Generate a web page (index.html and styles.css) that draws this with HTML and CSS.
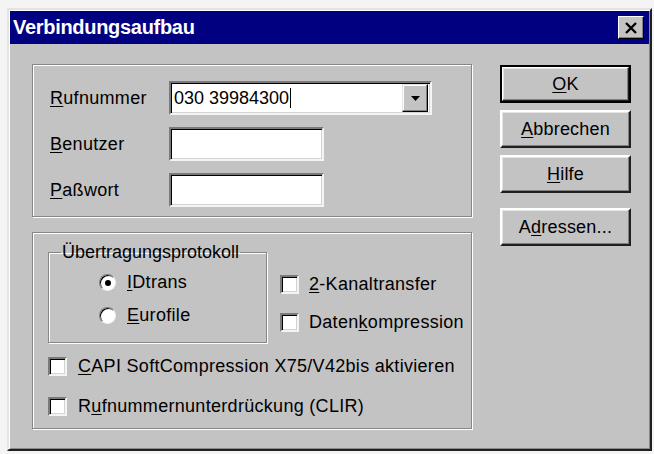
FILE: index.html
```html
<!DOCTYPE html>
<html lang="de">
<head>
    <meta charset="UTF-8">
    <title>Verbindungsaufbau</title>
    <link rel="stylesheet" href="styles.css">
</head>
<body>
    <!-- Dialog window -->
    <div class="window">
        <div class="titlebar">
            <span class="title">Verbindungsaufbau</span>
            <span class="close-btn">
                <svg width="14" height="12" viewBox="0 0 14 12">
                    <path d="M2 1 L12 11 M12 1 L2 11" stroke="#000" stroke-width="2.4" fill="none"/>
                </svg>
            </span>
        </div>

        <div class="dialog-body">
            <div class="left-col">
                <!-- Connection data -->
                <div class="group group-top">
                    <div class="field-row">
                        <label class="field-label"><u>R</u>ufnummer</label>
                        <div class="field combo">
                            <span class="combo-text">030 39984300<span class="caret"></span></span>
                            <span class="combo-btn">
                                <svg width="9" height="5" viewBox="0 0 9 5"><path d="M0 0 H9 L4.5 5 Z" fill="#000"/></svg>
                            </span>
                        </div>
                    </div>
                    <div class="field-row">
                        <label class="field-label"><u>B</u>enutzer</label>
                        <div class="field text-field"></div>
                    </div>
                    <div class="field-row">
                        <label class="field-label"><u>P</u>aßwort</label>
                        <div class="field text-field"></div>
                    </div>
                </div>

                <!-- Transfer options -->
                <div class="group group-bottom">
                    <div class="proto-row">
                        <fieldset class="subgroup">
                            <legend>Übertragungsprotokoll</legend>
                            <div class="option radio-opt">
                                <span class="radio checked"></span>
                                <span><u>I</u>Dtrans</span>
                            </div>
                            <div class="option radio-opt">
                                <span class="radio"></span>
                                <span><u>E</u>urofile</span>
                            </div>
                        </fieldset>
                        <div class="side-checks">
                            <div class="option">
                                <span class="checkbox"></span>
                                <span><u>2</u>-Kanaltransfer</span>
                            </div>
                            <div class="option">
                                <span class="checkbox"></span>
                                <span>Daten<u>k</u>ompression</span>
                            </div>
                        </div>
                    </div>
                    <div class="option wide-opt">
                        <span class="checkbox"></span>
                        <span><u>C</u>API SoftCompression X75/V42bis aktivieren</span>
                    </div>
                    <div class="option wide-opt">
                        <span class="checkbox"></span>
                        <span>R<u>u</u>fnummernunterdrückung (CLIR)</span>
                    </div>
                </div>
            </div>

            <!-- Command buttons -->
            <div class="btn-col">
                <button class="btn btn-default"><u>O</u>K</button>
                <button class="btn"><u>A</u>bbrechen</button>
                <button class="btn"><u>H</u>ilfe</button>
                <button class="btn btn-extra">A<u>d</u>ressen...</button>
            </div>
        </div>
    </div>
</body>
</html>
```

FILE: styles.css
```css
/* Page */
body {
    margin: 0;
    padding: 8px 0 0 7px;
    background-color: #f4f4f4;
    font-family: "Liberation Sans", Arial, sans-serif;
    font-size: 18px;
    letter-spacing: 0.3px;
    color: #000;
}

u {
    text-decoration: underline;
    text-underline-offset: 2px;
}

/* Raised window frame */
.window {
    box-sizing: border-box;
    width: 645px;
    height: 443px;
    padding: 1px;
    background-color: #c3c3c3;
    border: 2px solid;
    border-color: #e4e4e4 #202020 #202020 #e4e4e4;
    box-shadow: inset 1px 1px 0 #fff, inset -1px -1px 0 #888;
}

/* Title bar */
.titlebar {
    height: 33px;
    background-color: #000080;
    display: flex;
    align-items: center;
    justify-content: space-between;
    padding: 0 5px 0 3px;
}

.title {
    color: #fff;
    font-weight: bold;
    font-size: 20px;
    letter-spacing: -0.3px;
}

.close-btn {
    width: 26px;
    height: 23px;
    box-sizing: border-box;
    background-color: #c3c3c3;
    border: 1px solid;
    border-color: #fff #000 #000 #fff;
    box-shadow: inset -1px -1px 0 #808080;
    display: flex;
    align-items: center;
    justify-content: center;
}

/* Dialog content */
.dialog-body {
    display: flex;
    padding: 20px 0 0 22px;
}

.left-col {
    width: 440px;
    display: flex;
    flex-direction: column;
    gap: 15px;
}

/* Etched group frames */
.group,
.subgroup {
    box-sizing: border-box;
    border: 1px solid #868686;
    box-shadow: inset 1px 1px 0 #fff, 1px 1px 0 #fff;
}

.group-top {
    height: 153px;
    padding: 16px 0 0 17px;
    display: flex;
    flex-direction: column;
    gap: 12px;
}

.field-row {
    display: flex;
    align-items: center;
}

.field-label {
    width: 119px;
}

/* Sunken edit fields */
.field {
    box-sizing: border-box;
    height: 34px;
    background-color: #fff;
    border: 2px solid;
    border-color: #7a7a7a #f4f4f4 #f4f4f4 #7a7a7a;
    box-shadow: inset 1px 1px 0 #000, inset -1px -1px 0 #d4d4d4;
}

.text-field {
    width: 155px;
}

.combo {
    width: 263px;
    display: flex;
    align-items: center;
    justify-content: space-between;
    padding: 0 2px 0 3px;
    letter-spacing: 0;
}

.combo-text {
    display: flex;
    align-items: center;
}

.caret {
    width: 1px;
    height: 20px;
    background-color: #000;
    margin-left: 1px;
}

.combo-btn {
    box-sizing: border-box;
    width: 26px;
    height: 28px;
    background-color: #c3c3c3;
    border: 1px solid;
    border-color: #e4e4e4 #000 #000 #e4e4e4;
    box-shadow: inset -1px -1px 0 #808080, inset 1px 1px 0 #fff;
    display: flex;
    align-items: center;
    justify-content: center;
}

.group-bottom {
    height: 197px;
    padding: 9px 0 0 15px;
}

.proto-row {
    display: flex;
}

/* Nested frame with caption */
.subgroup {
    width: 219px;
    min-width: 0;
    height: 101px;
    margin: 0;
    padding: 0;
}

.subgroup legend {
    padding: 0 1px;
    margin-left: 12px;
    line-height: 20px;
    letter-spacing: 0;
}

.option {
    display: flex;
    align-items: center;
    gap: 11px;
    height: 35px;
}

.radio-opt {
    gap: 11px;
    height: 33px;
    padding-left: 50px;
}

.radio-opt:first-of-type {
    margin-top: 4px;
}

/* Round radio knob */
.radio {
    box-sizing: border-box;
    width: 17px;
    height: 17px;
    border-radius: 50%;
    background-color: #fff;
    border: 1px solid;
    border-color: #7a7a7a #f0f0f0 #f0f0f0 #7a7a7a;
    box-shadow: inset 1px 1px 0 #000;
    display: flex;
    align-items: center;
    justify-content: center;
}

.radio.checked::after {
    content: "";
    width: 6px;
    height: 6px;
    border-radius: 50%;
    background-color: #000;
}

/* Square check box */
.checkbox {
    box-sizing: border-box;
    width: 19px;
    height: 19px;
    background-color: #fff;
    border: 2px solid;
    border-color: #7a7a7a #f4f4f4 #f4f4f4 #7a7a7a;
    box-shadow: inset 1px 1px 0 #000, inset -1px -1px 0 #d4d4d4;
    flex-shrink: 0;
}

.side-checks {
    padding: 23px 0 0 13px;
}

.side-checks .option {
    height: 38px;
    gap: 10px;
}

.wide-opt {
    height: 40px;
    gap: 11px;
}

.proto-row + .wide-opt {
    margin-top: 3px;
}

/* Button column */
.btn-col {
    display: flex;
    flex-direction: column;
    gap: 7px;
    margin-left: 28px;
    padding-top: 1px;
}

.btn {
    box-sizing: border-box;
    width: 131px;
    height: 38px;
    font-family: inherit;
    font-size: 18px;
    letter-spacing: 0.2px;
    color: #000;
    background-color: #c3c3c3;
    border: 2px solid;
    border-color: #fff #202020 #202020 #fff;
    box-shadow: inset -1px -1px 0 #808080, inset 1px 1px 0 #e4e4e4;
    padding: 0;
}

.btn-default {
    outline: 2px solid #000;
    outline-offset: -2px;
    border-width: 3px;
}

.btn-extra {
    margin-top: 8px;
}
```
